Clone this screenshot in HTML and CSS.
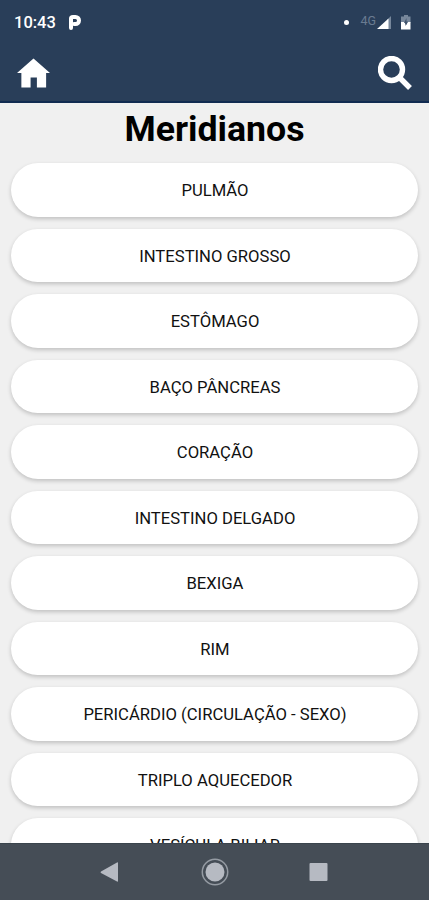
FILE: index.html
```html
<!DOCTYPE html>
<html lang="pt-BR">

<head>
    <meta charset="UTF-8">
    <meta name="viewport" content="width=device-width, initial-scale=1.0">
    <title>Meridianos</title>
    <link rel="stylesheet" href="styles.css">
</head>

<body>
    <div class="screen">
        <header class="header">
            <div class="status-bar">
                <span class="time">10:43</span>
                <svg class="parking" viewBox="0 0 14 17">
                    <path d="M3 14V4.500Q3 3 5 3H7.500A3.500 3.500 0 0 1 7.500 10H6" />
                </svg>
                <span class="dot"></span>
                <span class="network">4G</span>
                <svg class="signal" viewBox="0 0 15 14">
                    <path class="dim" d="M14 0V13H10V4z" />
                    <path d="M11.500 2.500V13H0z" />
                </svg>
                <svg class="battery" viewBox="0 0 10 15">
                    <path class="dim" d="M3 0H7V1.500H9.500V8H0V1.500H3z" />
                    <path d="M0 7H3.500L5 10L7 7H9.500V14.500H0z" />
                    <path class="bolt" d="M5.500 3L3 8H4.500V11L7 6.500H5.500z" />
                </svg>
            </div>
            <nav class="toolbar">
                <button aria-label="Início">
                    <svg class="home" viewBox="0 0 34 31">
                        <path d="M17 0L34 15H30V30H20.500V19.500H14V30H4.500V15H0z" />
                    </svg>
                </button>
                <button aria-label="Buscar">
                    <svg class="search" viewBox="0 0 34 34">
                        <circle cx="13.500" cy="13.500" r="11" />
                        <path d="M21.500 21.500L32 32" />
                    </svg>
                </button>
            </nav>
        </header>

        <main class="content">
            <h1>Meridianos</h1>
            <div class="list">
                <button class="item">PULMÃO</button>
                <button class="item">INTESTINO GROSSO</button>
                <button class="item">ESTÔMAGO</button>
                <button class="item">BAÇO PÂNCREAS</button>
                <button class="item">CORAÇÃO</button>
                <button class="item">INTESTINO DELGADO</button>
                <button class="item">BEXIGA</button>
                <button class="item">RIM</button>
                <button class="item">PERICÁRDIO (CIRCULAÇÃO - SEXO)</button>
                <button class="item">TRIPLO AQUECEDOR</button>
                <button class="item">VESÍCULA BILIAR</button>
            </div>
        </main>

        <footer class="nav-bar">
            <svg viewBox="0 0 28 28">
                <path d="M21 5V23Q21 24 20 23.500L4 15Q3 14 4 13.500L20 4.500Q21 4 21 5z" />
            </svg>
            <svg viewBox="0 0 28 28">
                <circle class="ring" cx="14" cy="14" r="12.700" />
                <circle cx="14" cy="14" r="9.500" />
            </svg>
            <svg viewBox="0 0 28 28">
                <rect x="4.500" y="5" width="18" height="18" rx="1" />
            </svg>
        </footer>
    </div>
</body>

</html>
```
FILE: styles.css
```css
body,
html {
    margin: 0;
    padding: 0;
    height: 100%;
    font-family: Roboto, "Liberation Sans", sans-serif;
}

* {
    box-sizing: border-box;
}

button {
    border: none;
    padding: 0;
    background: none;
    font-family: inherit;
}

svg {
    display: block;
    flex-shrink: 0;
}

.screen {
    height: 100vh;
    display: flex;
    flex-direction: column;
    overflow: hidden;
    background-color: #f0f0f0;
}

.header {
    height: 103px;
    flex-shrink: 0;
    background-color: #293e59;
    border-bottom: 2px solid #112b51;
}

.status-bar {
    height: 45px;
    padding: 0 18px 0 14px;
    display: flex;
    align-items: center;
    color: #fff;
}

.time {
    font-size: 16.5px;
    font-weight: 500;
}

.parking {
    width: 14px;
    height: 17px;
    margin-left: 12px;
    fill: none;
    stroke: #fff;
    stroke-width: 4;
    stroke-linecap: round;
}

.dot {
    width: 5px;
    height: 5px;
    margin-left: auto;
    border-radius: 50%;
    background-color: #fff;
}

.network {
    margin: -5px 1px 0 11px;
    font-size: 12.5px;
    color: #697b91;
}

.signal {
    width: 15px;
    height: 14px;
    margin-right: 9px;
    fill: #fff;
}

.battery {
    width: 10px;
    height: 15px;
    fill: #fff;
}

.dim {
    fill: #77879b;
}

.bolt {
    fill: #41546d;
}

.toolbar {
    height: 56px;
    padding: 0 17px;
    display: flex;
    align-items: center;
    justify-content: space-between;
}

.home {
    width: 33px;
    height: 31px;
    fill: #fff;
}

.search {
    width: 34px;
    height: 34px;
    fill: none;
    stroke: #fff;
    stroke-width: 5.4;
}

.content {
    flex: 1;
    min-height: 0;
    overflow: hidden;
}

h1 {
    margin: 0;
    height: 60px;
    line-height: 53px;
    font-size: 35.7px;
    font-weight: 700;
    text-align: center;
    color: #000;
}

.list {
    padding: 0 11px;
    display: flex;
    flex-direction: column;
    gap: 12px;
}

.item {
    height: 53.5px;
    flex-shrink: 0;
    padding: 1.5px 0 0 1px;
    border-radius: 27px;
    background-color: #fff;
    box-shadow: 0 2px 4px rgba(0, 0, 0, 0.2);
    font-size: 16.65px;
    color: #111;
}

.nav-bar {
    height: 57px;
    flex-shrink: 0;
    display: flex;
    align-items: center;
    justify-content: center;
    gap: 76px;
    background-color: #454d56;
    border-top: 1px solid #3a444c;
}

.nav-bar svg {
    width: 28px;
    height: 28px;
    fill: #b6bac2;
}

.nav-bar .ring {
    fill: none;
    stroke: #959ba3;
    stroke-width: 1.500;
}
```
